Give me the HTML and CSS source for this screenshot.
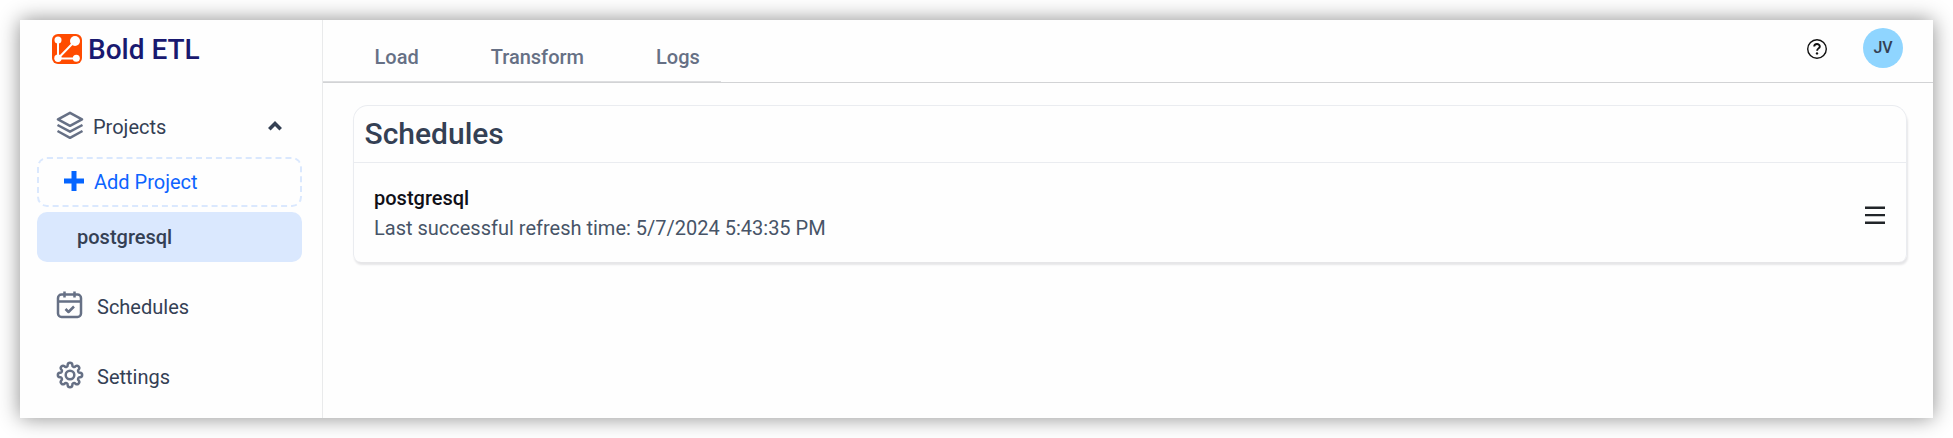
FILE: index.html
```html
<!DOCTYPE html>
<html lang="en">
<head>
<meta charset="utf-8">
<title>Bold ETL</title>
<link rel="stylesheet" href="styles.css">
</head>
<body>
<div class="window">
  <aside class="sidebar">
    <div class="brand">
      <svg class="brand-icon" viewBox="0 0 30 30">
        <rect width="30" height="30" rx="6" fill="#ff4b00"/>
        <path d="M6 6v18.500M6 24.500L23 7M6 24.500h18" stroke="#fff" stroke-width="2" fill="none"/>
        <g fill="#fff"><circle cx="6" cy="6" r="3.500"/><circle cx="23" cy="7" r="5"/><circle cx="6" cy="24.300" r="3.700"/><circle cx="24.300" cy="24.300" r="3.500"/></g>
      </svg>
      <span class="brand-name">Bold ETL</span>
    </div>
    <nav class="menu">
      <div class="menu-item projects">
        <svg class="icon" viewBox="0 0 28 28"><path d="M14 1.800L26 8.300 14 14.800 2 8.300zM1.500 14L14 20.700 26.500 14M1.500 20L14 26.800 26.500 20"/></svg>
        <span class="label">Projects</span>
        <svg class="chevron" viewBox="0 0 14 10"><path d="M1.300 8.300L7 2.600l5.700 5.700"/></svg>
      </div>
      <div class="add-project">
        <svg class="plus" viewBox="0 0 20 20"><path d="M10 0v20M0 10h20"/></svg>
        <span>Add Project</span>
      </div>
      <div class="project-active">postgresql</div>
      <div class="menu-item schedules">
        <svg class="icon" viewBox="0 0 28 28"><rect x="2" y="3.500" width="23" height="22.500" rx="3.500"/><path d="M2 10.500h23M8.500 .5v6M18.500 .5v6M9.500 18l3 3 5.500-5.500"/></svg>
        <span class="label">Schedules</span>
      </div>
      <div class="menu-item settings">
        <svg class="icon" viewBox="0 0 28 28"><circle cx="14" cy="14" r="4.300"/><path d="M11.680 3.960A2.330 2.330 0 0 1 16.320 3.960A1.750 1.750 0 0 0 19.460 5.270A2.330 2.330 0 0 1 22.730 8.540A1.750 1.750 0 0 0 24.040 11.680A2.330 2.330 0 0 1 24.040 16.320A1.750 1.750 0 0 0 22.730 19.460A2.330 2.330 0 0 1 19.460 22.730A1.750 1.750 0 0 0 16.320 24.040A2.330 2.330 0 0 1 11.680 24.040A1.750 1.750 0 0 0 8.540 22.730A2.330 2.330 0 0 1 5.270 19.460A1.750 1.750 0 0 0 3.960 16.320A2.330 2.330 0 0 1 3.960 11.680A1.750 1.750 0 0 0 5.270 8.540A2.330 2.330 0 0 1 8.540 5.270A1.750 1.750 0 0 0 11.680 3.960z"/></svg>
        <span class="label">Settings</span>
      </div>
    </nav>
  </aside>
  <main class="main">
    <header class="topbar">
      <nav class="tabs">
        <span>Load</span><span>Transform</span><span>Logs</span>
      </nav>
      <div class="actions">
        <svg class="help" viewBox="0 0 20 20"><circle cx="10" cy="10" r="9.300"/><path class="mark" d="M7.200 7.600c0-3.400 5.600-3.300 5.600-.2 0 2-2.700 2-2.700 4.400"/><circle class="dot" cx="10" cy="14.400" r="1.200"/></svg>
        <div class="avatar">JV</div>
      </div>
    </header>
    <section class="card">
      <h1 class="card-title">Schedules</h1>
      <div class="card-row">
        <div class="details">
          <div class="name">postgresql</div>
          <div class="time">Last successful refresh time: 5/7/2024 5:43:35 PM</div>
        </div>
        <svg class="burger" viewBox="0 0 20 18"><path d="M0 1.750h20M0 9.200h20M0 16.750h20"/></svg>
      </div>
    </section>
  </main>
</div>
</body>
</html>
```

FILE: styles.css
```css
* { box-sizing: border-box; }
body {
  margin: 0;
  padding: 20px;
  height: 438px;
  overflow: hidden;
  background: #fff;
  font-family: Roboto, "Liberation Sans", sans-serif;
  font-size: 20px;
  line-height: 30px;
  color: #344054;
}
svg { display: block; flex: none; fill: none; }
.window {
  display: flex;
  height: 398px;
  background: #fefefe;
  box-shadow: 0 0 20px rgba(0, 0, 0, 0.45);
}
.sidebar {
  width: 303px;
  border-right: 1px solid #e9eaeb;
}
.brand {
  display: flex;
  align-items: center;
  height: 58px;
  padding-left: 32px;
}
.brand-icon { width: 30px; height: 30px; }
.brand-name {
  margin-left: 6px;
  padding-top: 2px;
  font-size: 28px;
  font-weight: 500;
  color: #191970;
}
.menu { padding: 29px 20px 0 17px; }
.menu-item {
  display: flex;
  align-items: center;
  height: 40px;
  padding-left: 19px;
}
.icon {
  width: 28px;
  height: 28px;
  margin-top: -4px;
  stroke: #667085;
  stroke-width: 2.5;
  stroke-linejoin: round;
}
.projects { padding-right: 20px; }
.projects .label { margin-left: 9px; }
.schedules .label, .settings .label { margin-left: 13px; }
.chevron {
  width: 14px;
  height: 10px;
  margin-left: auto;
  margin-top: -2px;
  stroke: #344054;
  stroke-width: 3.6;
}
.add-project {
  display: flex;
  align-items: center;
  height: 50px;
  margin-top: 10px;
  padding-left: 25px;
  border: 2px dashed #dae8fe;
  border-radius: 10px;
  color: #0d63ff;
}
.plus {
  width: 20px;
  height: 20px;
  margin: -2px 10px 0 0;
  stroke: #0565ff;
  stroke-width: 5;
}
.project-active {
  height: 50px;
  margin-top: 5px;
  padding: 10px 0 0 40px;
  border-radius: 10px;
  background: #dae8fe;
  font-weight: 500;
}
.schedules { margin-top: 25px; }
.settings { margin-top: 30px; }
.main { flex: 1; }
.topbar {
  display: flex;
  justify-content: space-between;
  height: 63px;
  border-bottom: 1px solid #d2d3d5;
}
.tabs {
  display: flex;
  gap: 72px;
  width: 398px;
  padding: 22px 0 0 51.500px;
  border-bottom: 1px solid #dddee0;
  font-weight: 500;
  color: #667085;
}
.actions {
  display: flex;
  align-items: flex-start;
  padding: 8px 30px 0 0;
}
.help {
  width: 20px;
  height: 20px;
  margin: 11px 36px 0 0;
  stroke: #111;
  stroke-width: 1.4;
}
.mark { stroke-width: 1.9; }
.dot { fill: #111; stroke: none; }
.avatar {
  width: 40px;
  height: 40px;
  border-radius: 50%;
  background: #8fd5ff;
  font-size: 16px;
  font-weight: 500;
  line-height: 39px;
  text-align: center;
}
.card {
  height: 157px;
  margin: 22px 26px 0 30px;
  border: 1px solid #eaecf0;
  border-bottom: 0;
  border-radius: 15px 15px 8px 8px;
  box-shadow: 1px 3px 2px rgba(16, 24, 40, 0.1);
}
.card-title {
  height: 57px;
  margin: 0;
  padding: 0 0 0 10.500px;
  border-bottom: 1px solid #eaecf0;
  font-size: 30px;
  font-weight: 500;
  line-height: 55px;
}
.card-row {
  display: flex;
  align-items: center;
  justify-content: space-between;
  height: 99px;
  padding: 0 21px 0 20px;
}
.name { font-weight: 500; color: #101018; }
.time { color: #475467; }
.burger {
  width: 20px;
  height: 18px;
  margin-top: 4px;
  stroke: #212529;
  stroke-width: 2.3;
}
```
